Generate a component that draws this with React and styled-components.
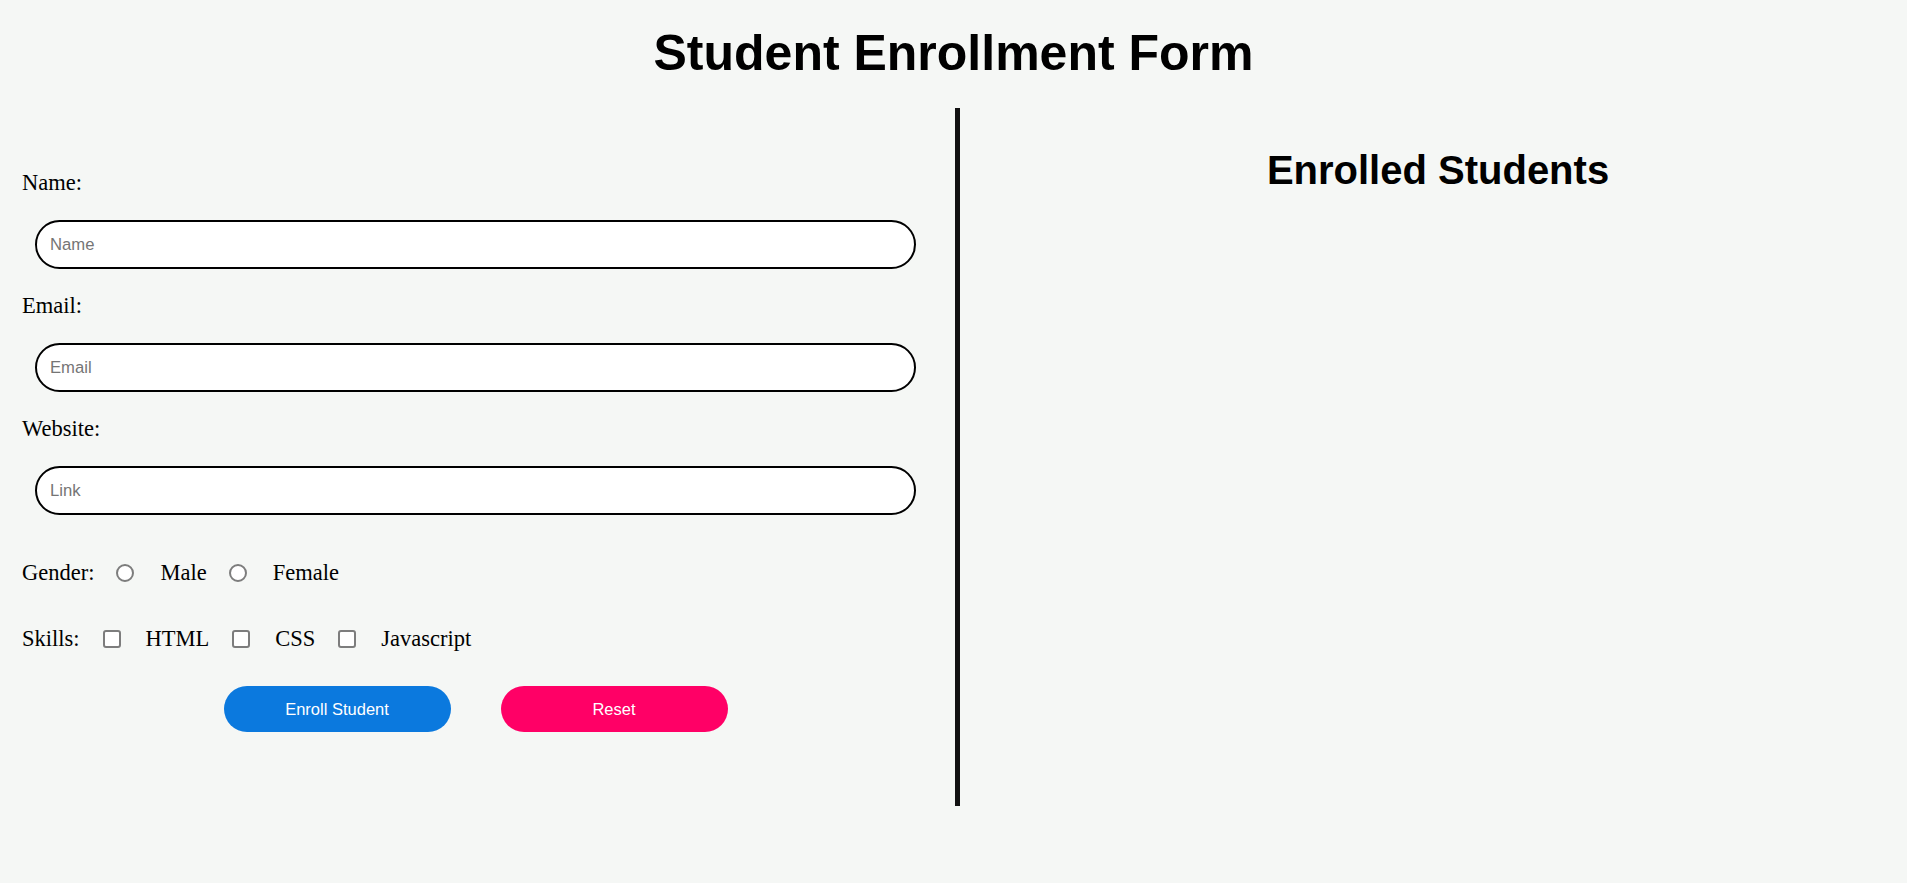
import React from "react";
import styled, { createGlobalStyle } from "styled-components";

const GlobalStyle = createGlobalStyle`
  body {
    margin: 0;
    background: #f5f7f5;
    font-family: "Liberation Serif", "Times New Roman", serif;
    color: #000;
  }
`;

const StyledPage = styled.div`
  padding-top: 25px;
`;

const StyledTitle = styled.h1`
  margin: 0;
  font-family: "Liberation Sans", Arial, sans-serif;
  font-size: 50px;
  line-height: 57.5px;
  font-weight: bold;
  text-align: center;
`;

const StyledMain = styled.main`
  display: flex;
  margin-top: 25.5px;
`;

const StyledForm = styled.form`
  width: 960px;
  box-sizing: border-box;
  border-right: 5px solid #111;
  padding: 62px 22px 74px;
`;

const StyledLabel = styled.label`
  display: block;
  font-size: 22.5px;
  line-height: 26px;
  margin-bottom: 24px;
`;

const StyledInput = styled.input`
  display: block;
  box-sizing: border-box;
  width: calc(100% - 30px);
  height: 49px;
  margin: 0 17px 24px 13px;
  padding: 0 13px;
  border: 2px solid #000;
  border-radius: 25px;
  background: #fff;
  font-family: "Liberation Sans", Arial, sans-serif;
  font-size: 16.67px;
  outline: none;

  &::placeholder {
    color: #757575;
  }
`;

const StyledOptions = styled.div`
  padding-top: 21px;
  display: flex;
  flex-direction: column;
  gap: 40px;
`;

const StyledChoiceRow = styled.div`
  display: flex;
  align-items: center;
  height: 26px;
  font-size: 22.5px;
  line-height: 26px;
`;

const StyledControl = styled.input`
  appearance: none;
  -webkit-appearance: none;
  width: 18px;
  height: 18px;
  box-sizing: border-box;
  margin: ${(p) => (p.type === "radio" ? "0 26px 0 22px" : "0 25px 0 23px")};
  border: 2px solid #7d7d7d;
  border-radius: ${(p) => (p.type === "radio" ? "50%" : "3px")};
  background: #fff;
`;

const StyledButtons = styled.div`
  display: flex;
  justify-content: center;
  gap: 50px;
  margin-top: 34px;
  padding-right: 4px;
`;

const StyledButton = styled.button`
  width: 227px;
  height: 46px;
  border: none;
  border-radius: 23px;
  background: ${(p) => p.$color};
  color: #fff;
  font-family: "Liberation Sans", Arial, sans-serif;
  font-size: 16.5px;
  cursor: pointer;
`;

const StyledList = styled.section`
  flex: 1;
  padding-left: 9px;
  text-align: center;
`;

const StyledListTitle = styled.h2`
  margin: 40px 0 0;
  font-family: "Liberation Sans", Arial, sans-serif;
  font-size: 40px;
  font-weight: bold;
`;

const fields = [
  { label: "Name:", placeholder: "Name", type: "text" },
  { label: "Email:", placeholder: "Email", type: "email" },
  { label: "Website:", placeholder: "Link", type: "url" },
];

export default function App() {
  return (
    <>
      <GlobalStyle />
      <StyledPage>
        <StyledTitle>Student Enrollment Form</StyledTitle>
        <StyledMain>
          <StyledForm onSubmit={(e) => e.preventDefault()}>
            {fields.map((field) => (
              <div key={field.label}>
                <StyledLabel>{field.label}</StyledLabel>
                <StyledInput type={field.type} placeholder={field.placeholder} />
              </div>
            ))}
            <StyledOptions>
              <StyledChoiceRow>
                Gender:
                <StyledControl type="radio" name="gender" />
                Male
                <StyledControl type="radio" name="gender" />
                Female
              </StyledChoiceRow>
              <StyledChoiceRow>
                Skills:
                <StyledControl type="checkbox" />
                HTML
                <StyledControl type="checkbox" />
                CSS
                <StyledControl type="checkbox" />
                Javascript
              </StyledChoiceRow>
            </StyledOptions>
            <StyledButtons>
              <StyledButton type="submit" $color="#0b79de">
                Enroll Student
              </StyledButton>
              <StyledButton type="reset" $color="#ff0066">
                Reset
              </StyledButton>
            </StyledButtons>
          </StyledForm>
          <StyledList>
            <StyledListTitle>Enrolled Students</StyledListTitle>
          </StyledList>
        </StyledMain>
      </StyledPage>
    </>
  );
}
